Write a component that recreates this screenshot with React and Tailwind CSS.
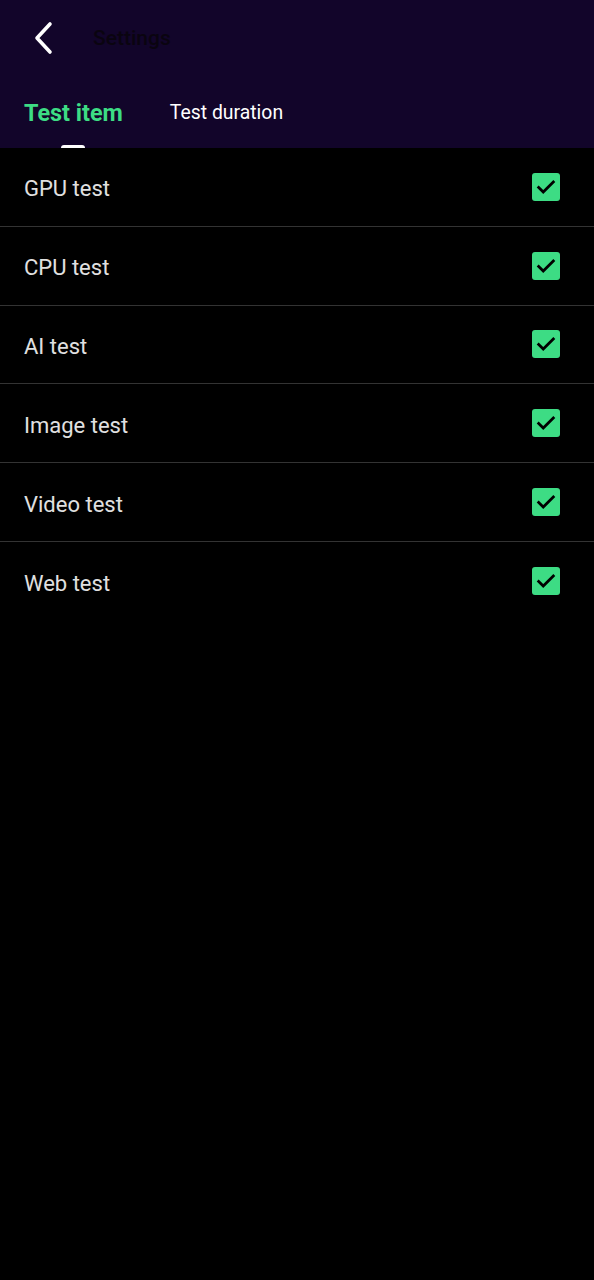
import React from 'react';

const tests = ['GPU test', 'CPU test', 'AI test', 'Image test', 'Video test', 'Web test'];

const CheckBox = () => (
  <div className="flex h-[28px] w-[28px] items-center justify-center rounded-[3px] bg-[#3ddc84]">
    <svg width="22" height="22" viewBox="0 0 24 24" fill="none">
      <path d="M4 12.5l5 5L20 6.5" stroke="#000" strokeWidth="3" strokeLinecap="square" />
    </svg>
  </div>
);

export default function App() {
  return (
    <div className="min-h-[1280px] w-[594px] bg-black font-['Roboto',sans-serif]">
      {/* Cabecera */}
      <div className="bg-[#12052a]">
        <div className="flex h-[76px] items-center">
          <button className="ml-[31px] flex h-[30px] w-[36px] items-center">
            <svg width="24" height="34" viewBox="0 0 24 34" fill="none">
              <path d="M19 3L6 17l13 14" stroke="#fff" strokeWidth="3.6" strokeLinecap="round" strokeLinejoin="round" />
            </svg>
          </button>
          <span className="ml-[26px] mt-[2px] text-[21px] font-medium text-[#0a0410]">Settings</span>
        </div>
        <div className="flex h-[72px] items-start">
          <div className="relative ml-[24px] flex h-full flex-col items-center">
            <span className="mt-[22px] text-[23.4px] font-bold leading-[30px] text-[#3ddc84]">Test item</span>
            <div className="absolute bottom-0 h-[3px] w-[24px] rounded-t-sm bg-white"></div>
          </div>
          <span className="ml-[47px] mt-[24px] text-[19.4px] leading-[26px] text-white">Test duration</span>
        </div>
      </div>

      {/* Lista */}
      <div>
        {tests.map((t, i) => (
          <div
            key={t}
            className={`flex h-[78.8px] items-center justify-between pl-[24px] pr-[34px] ${
              i < tests.length - 1 ? 'border-b border-[#333]' : ''
            }`}
          >
            <span className="mt-[4px] text-[22px] text-[#e0e0e0]">{t}</span>
            <CheckBox />
          </div>
        ))}
      </div>
    </div>
  );
}
